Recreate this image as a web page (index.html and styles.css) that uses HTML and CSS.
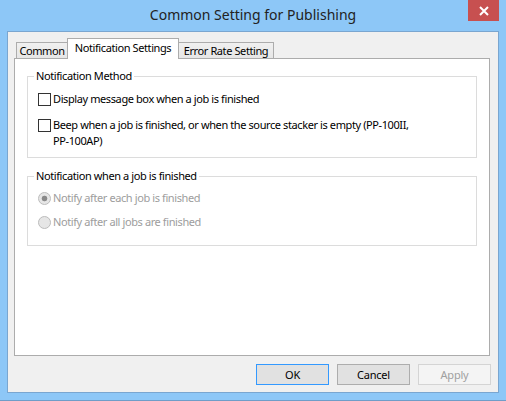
FILE: index.html
```html
<!DOCTYPE html>
<html>
<head>
<meta charset="utf-8">
<link rel="stylesheet" href="styles.css">
</head>
<body>
<div class="window">
  <div class="titlebar">
    <div class="tb-spacer"></div>
    <div class="title">Common Setting for Publishing</div>
    <div class="close">
      <svg width="10" height="10" viewBox="0 0 10 10"><path d="M1 1 L9 9 M9 1 L1 9" stroke="#fff" stroke-width="2" fill="none"/></svg>
    </div>
  </div>
  <div class="client">
    <div class="tabs">
      <div class="tab tab-common">Common</div>
      <div class="tab tab-active">Notification Settings</div>
      <div class="tab tab-error">Error Rate Setting</div>
    </div>
    <div class="panel">
      <fieldset class="group group-method">
        <legend>Notification Method</legend>
        <label class="row row-first"><input type="checkbox" class="check"><span class="label-text">Display message box when a job is finished</span></label>
        <label class="row row-second"><input type="checkbox" class="check"><span class="label-text">Beep when a job is finished, or when the source stacker is empty (PP-100II,<br>PP-100AP)</span></label>
      </fieldset>
      <fieldset class="group group-when">
        <legend>Notification when a job is finished</legend>
        <label class="row row-radio disabled"><input type="radio" name="when" class="radio" checked disabled><span class="label-text">Notify after each job is finished</span></label>
        <label class="row row-radio row-radio2 disabled"><input type="radio" name="when" class="radio" disabled><span class="label-text">Notify after all jobs are finished</span></label>
      </fieldset>
    </div>
    <div class="buttons">
      <button class="btn btn-default">OK</button>
      <button class="btn">Cancel</button>
      <button class="btn btn-disabled" disabled>Apply</button>
    </div>
  </div>
</div>
</body>
</html>
```
FILE: styles.css
```css
html, body {
  margin: 0;
  padding: 0;
}
body {
  font-family: "Noto Sans", "Open Sans", sans-serif;
  font-size: 11px;
  letter-spacing: -0.4px;
  color: #000;
  background: #8dc7f7;
}
.window {
  width: 506px;
  height: 401px;
  box-sizing: border-box;
  background: #8dc7f7;
  border-bottom: 1px solid #6f9dc8;
  display: flex;
  flex-direction: column;
}
.titlebar {
  height: 31px;
  display: grid;
  grid-template-columns: 1fr auto 1fr;
  flex: none;
}
.title {
  align-self: center;
  font-size: 14px;
  letter-spacing: 0;
  line-height: 18px;
  color: #222;
  margin-top: -1px;
}
.close {
  justify-self: end;
  align-self: start;
  width: 31px;
  height: 21px;
  margin-right: 7px;
  background: #c75050;
  display: flex;
  align-items: center;
  justify-content: center;
}
.close svg {
  display: block;
}
.client {
  margin: 0 7px 7px 7px;
  border: 1px solid #7aa6d0;
  background: #f0f0f0;
  height: 362px;
  box-sizing: border-box;
  padding: 6px 7px 7px 6px;
  display: flex;
  flex-direction: column;
}
.tabs {
  height: 20px;
  display: flex;
  align-items: flex-end;
  padding-left: 2px;
  flex: none;
}
.tab {
  box-sizing: border-box;
  height: 16px;
  border: 1px solid #acacac;
  border-bottom: none;
  background: linear-gradient(#f0f0f0, #e6e6e6);
  text-align: center;
  line-height: 15px;
  white-space: nowrap;
}
.tab-common {
  width: 51px;
  border-right: none;
}
.tab-active {
  width: 112px;
  height: 21px;
  margin-bottom: -1px;
  background: #fff;
  position: relative;
  z-index: 1;
  line-height: 18px;
}
.tab-error {
  width: 95px;
  border-left: none;
}
.panel {
  height: 298px;
  box-sizing: border-box;
  margin-right: 1px;
  border: 1px solid #acacac;
  background: #fff;
  padding: 9px 12px 0 12px;
  flex: none;
}
.group {
  margin: 0;
  border: 1px solid #dcdcdc;
  padding: 7px 10px 8px 10px;
  min-width: 0;
}
.group legend {
  padding: 0 2px;
  margin-left: -4px;
  line-height: 16px;
}
.group-when {
  margin-top: 10px;
  padding-top: 6px;
  padding-bottom: 15px;
}
.row {
  display: flex;
  align-items: flex-start;
  line-height: 16px;
  white-space: nowrap;
}
.row-second {
  margin-top: 10px;
}
.row-radio2 {
  margin-top: 8px;
}
.label-text {
  margin-left: 2px;
}
.check {
  appearance: none;
  -webkit-appearance: none;
  width: 13px;
  height: 13px;
  margin: 2px 0 0 0;
  border: 1px solid #333;
  background: #fff;
  box-sizing: border-box;
  flex: none;
}
.radio {
  appearance: none;
  -webkit-appearance: none;
  width: 13px;
  height: 13px;
  margin: 2px 0 0 0;
  border: 1px solid #bcbcbc;
  border-radius: 50%;
  background: #e6e6e6;
  box-sizing: border-box;
  flex: none;
}
.radio:checked {
  background: radial-gradient(circle, #8a8a8a 0, #8a8a8a 2.5px, #e6e6e6 3.2px);
}
.disabled {
  color: #9d9d9d;
}
.buttons {
  display: flex;
  justify-content: flex-end;
  gap: 8px;
  margin-top: 8px;
  flex: none;
}
.btn {
  width: 73px;
  height: 21px;
  box-sizing: border-box;
  margin: 0;
  padding: 0;
  border: 1px solid #adadad;
  background: #e1e1e1;
  font-family: "Noto Sans", "Open Sans", sans-serif;
  font-size: 11px;
  letter-spacing: -0.2px;
  line-height: 18px;
  color: #000;
}
.btn-default {
  border-color: #3399ff;
}
.btn-disabled {
  border-color: #d4d4d4;
  background: #f4f4f4;
  color: #a0a0a0;
}
```
